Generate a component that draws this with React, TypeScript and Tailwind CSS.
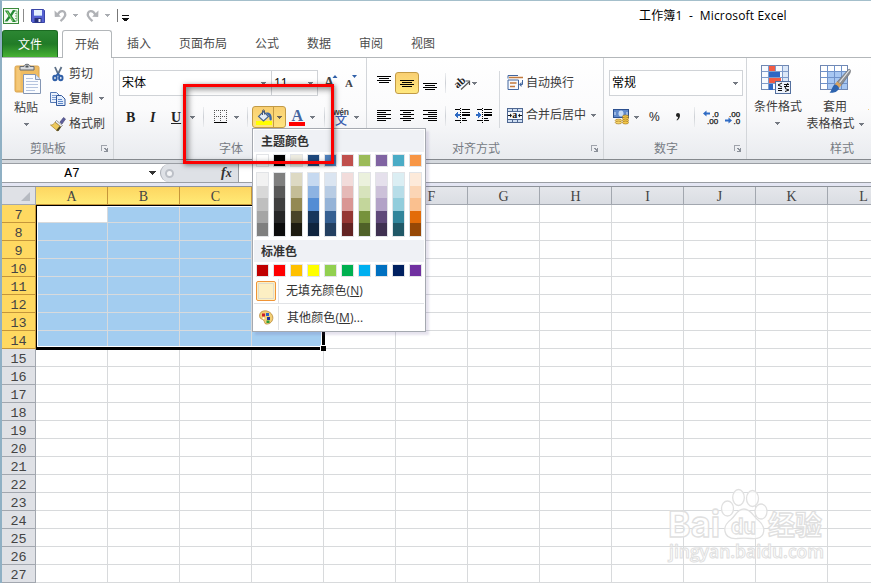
import React from 'react';

const COLUMNS = ['A', 'B', 'C', 'D', 'E', 'F', 'G', 'H', 'I', 'J', 'K', 'L'];
const ROWS = Array.from({ length: 21 }, (_, i) => i + 7);
const TABS = [
  { label: '插入', cls: 'ml-[15px]' },
  { label: '页面布局', cls: 'ml-[28px]' },
  { label: '公式', cls: 'ml-[28px]' },
  { label: '数据', cls: 'ml-[28px]' },
  { label: '审阅', cls: 'ml-[28px]' },
  { label: '视图', cls: 'ml-[28px]' },
];

const THEME = ['#ffffff', '#000000', '#eeece1', '#1f497d', '#4f81bd', '#c0504d', '#9bbb59', '#8064a2', '#4bacc6', '#f79646'];
const SHADES = [
  ['#f2f2f2', '#d8d8d8', '#bfbfbf', '#a5a5a5', '#7f7f7f'],
  ['#7f7f7f', '#595959', '#3f3f3f', '#262626', '#0c0c0c'],
  ['#ddd9c3', '#c4bd97', '#938953', '#494429', '#1d1b10'],
  ['#c6d9f0', '#8db3e2', '#548dd4', '#17365d', '#0f243e'],
  ['#dbe5f1', '#b8cce4', '#95b3d7', '#366092', '#244061'],
  ['#f2dcdb', '#e5b9b7', '#d99694', '#953734', '#632423'],
  ['#ebf1dd', '#d7e3bc', '#c3d69b', '#76923c', '#4f6128'],
  ['#e5e0ec', '#ccc1d9', '#b2a2c7', '#5f497a', '#3f3151'],
  ['#dbeef3', '#b7dde8', '#92cddc', '#31859b', '#205867'],
  ['#fdeada', '#fbd5b5', '#fac08f', '#e36c09', '#974806'],
];
const STANDARD = ['#c00000', '#ff0000', '#ffc000', '#ffff00', '#92d050', '#00b050', '#00b0f0', '#0070c0', '#002060', '#7030a0'];

function Caret({ className = '', color = '#747982' }: { className?: string; color?: string }) {
  return (
    <svg width="5" height="3" viewBox="0 0 5 3" className={`shrink-0 ${className}`} shapeRendering="crispEdges">
      <path d="M0 0h5v1h-1v1h-1v1h-1v-1h-1v-1h-1z" fill={color} />
    </svg>
  );
}

function Sep({ className = '' }: { className?: string }) {
  return <div className={`w-px h-5 shrink-0 bg-linear-to-b from-[#eceef0] via-[#cdd0d5] to-[#eceef0] ${className}`} />;
}

function Launcher({ className = '' }: { className?: string }) {
  return (
    <svg width="8" height="8" viewBox="0 0 8 8" className={`shrink-0 ${className}`} shapeRendering="crispEdges">
      <path d="M0.5 6V0.5H6" fill="none" stroke="#9fa3ab" />
      <path d="M7 3v4H3v-1h2l-2-2v-1h1l2 2v-2z" fill="#8b9099" />
    </svg>
  );
}

// rows are [x, width] pairs, drawn every other pixel
function Lines({ rows, className = '' }: { rows: number[][]; className?: string }) {
  return (
    <svg width="15" height={rows.length * 2} viewBox={`0 0 15 ${rows.length * 2}`} className={`shrink-0 ${className}`} shapeRendering="crispEdges">
      {rows.map(([x, w], i) => (
        <rect key={i} x={x} y={i * 2} width={w} height="1" fill="#000" />
      ))}
    </svg>
  );
}

const V_LINES = [[0, 14], [2, 10], [0, 14], [2, 10]];
const LEFT_LINES = [[0, 14], [0, 9], [0, 14], [0, 9], [0, 14], [0, 9]];
const CENTER_LINES = [[0, 14], [3, 8], [0, 14], [3, 8], [0, 14], [3, 8]];
const RIGHT_LINES = [[0, 14], [5, 9], [0, 14], [5, 9], [0, 14], [5, 9]];

function ExcelLogo() {
  return (
    <svg width="16" height="16" viewBox="0 0 16 16">
      <rect x="0.5" y="0.5" width="15" height="15" fill="#f4faf2" stroke="#3c8a3c" />
      <path d="M11 3h3v10h-3M12 5.5h2M12 8h2M12 10.5h2" stroke="#79b878" fill="none" />
      <path d="M1.8 2.5h3.4l2.2 3.4 2.5-3.9 2.6.2-3.6 5.7 4 6H9.6l-2.5-3.9-2.6 3.6H1.5L5.6 8z" fill="#258a35" />
      <path d="M4 3.5l6 9.5" stroke="#7fca68" strokeWidth="1.2" />
    </svg>
  );
}

function SaveIcon() {
  return (
    <svg width="14" height="14" viewBox="0 0 14 14">
      <path d="M0.5 0.5h12l1 1v12h-12l-1-1z" fill="#5561d2" stroke="#3a45a6" />
      <rect x="3" y="1" width="8" height="6" fill="#e3effe" />
      <path d="M3 6.5h8" stroke="#a9c3ee" />
      <rect x="3.5" y="9" width="7" height="4.5" fill="#26307a" />
      <rect x="7.5" y="10" width="2" height="3" fill="#f1f3fb" />
    </svg>
  );
}

function UndoIcon({ flip = false }: { flip?: boolean }) {
  return (
    <svg width="13" height="14" viewBox="0 0 13 14" className={flip ? '-scale-x-100' : ''}>
      <path d="M3.5 6C5 3 7 2 8.500 2.200c2.500.300 3.300 2.800 2.300 5-.700 1.800-2.300 3.300-4.300 5" fill="none" stroke="#b0b2b6" strokeWidth="2.300" />
      <path d="M0.5 1.5l.300 6.500 6-.300-2-2.200z" fill="#b0b2b6" />
    </svg>
  );
}

function PasteIcon() {
  return (
    <svg width="28" height="32" viewBox="0 0 28 32">
      <rect x="1" y="3" width="24" height="26" rx="1.5" fill="#efbc62" stroke="#d9a450" />
      <path d="M2.5 5h4v22h-4z" fill="#f4c878" />
      <path d="M6 3.5h4C10 .5 16 .5 16 3.5h4v3.500H6z" fill="#d7dade" stroke="#64696f" />
      <rect x="11.5" y="2.5" width="3" height="2" fill="#4f5459" />
      <path d="M9.5 11.5h12l5 5v14h-17z" fill="#fafcff" stroke="#8496b4" />
      <path d="M21.5 11.5v5h5" fill="#dce6f5" stroke="#8496b4" />
      <path d="M12 15.5h7M12 18.5h12M12 21.5h12M12 24.5h12M12 27.5h9" stroke="#b5c4df" />
    </svg>
  );
}

function CutIcon() {
  return (
    <svg width="16" height="16" viewBox="0 0 16 16">
      <path d="M5 1l3.500 8M11.5 1L7.500 9" stroke="#5d7088" strokeWidth="1.800" fill="none" />
      <ellipse cx="5" cy="12" rx="1.700" ry="2.200" fill="none" stroke="#2f5fa8" strokeWidth="2" />
      <ellipse cx="10.800" cy="12" rx="1.700" ry="2.200" fill="none" stroke="#2f5fa8" strokeWidth="2" />
      <path d="M6 10l2-2 2 2" stroke="#2f5fa8" strokeWidth="1.800" fill="none" />
    </svg>
  );
}

function CopyIcon() {
  return (
    <svg width="16" height="16" viewBox="0 0 16 16">
      <path d="M0.5 1.5h6l3 3v7h-9z" fill="#eaf1fc" stroke="#5479b5" />
      <path d="M2 4.5h4M2 6.5h4M2 8.5h4" stroke="#7fa0d4" />
      <path d="M6.5 4.5h5l3.500 3.500v6.500h-8.500z" fill="#e3edfb" stroke="#33589b" />
      <path d="M8 8.5h4M8 10.5h5M8 12.5h5" stroke="#5f88c8" />
    </svg>
  );
}

function BrushIcon() {
  return (
    <svg width="16" height="16" viewBox="0 0 16 16">
      <path d="M10 6l3.500-4.500 2 1.500L12 8z" fill="#5b5d9b" stroke="#3f3f71" strokeWidth=".6" />
      <path d="M6.5 4.5l6 5-1.500 1.500-6-5z" fill="#eceef2" stroke="#777" strokeWidth=".7" />
      <path d="M5 6.200l5.500 4.500-3 4.300L.5 9c2 .3 3.500-1 4.500-2.800z" fill="#edc95c" stroke="#a98325" strokeWidth=".7" />
      <path d="M6 14.500l3.500-4.200 1.500 1L8.500 15z" fill="#4c4522" />
    </svg>
  );
}

function BorderIcon() {
  return (
    <svg width="13" height="14" viewBox="0 0 13 14" shapeRendering="crispEdges">
      <path d="M.5 0v12M6.5 0v12M12.5 0v12M0 .5h13M0 6.5h13" stroke="#555" strokeDasharray="1 1" fill="none" />
      <rect x="0" y="12" width="13" height="1" fill="#000" />
    </svg>
  );
}

function FillIcon() {
  return (
    <svg width="17" height="17" viewBox="0 0 17 17">
      <rect x="0" y="12" width="16" height="4" fill="#ffff00" />
      <path d="M7.500 2.500l5 5-5 4.500-5-4.500z" fill="#e3edf7" stroke="#43618e" strokeWidth="1.100" />
      <path d="M6.500 6V2c0-1.500 2-1.500 2 0v3.500" fill="none" stroke="#4b5970" />
      <path d="M10 3.500c4-.5 6 1.500 5.800 7-.5 1.500-2.300 1-2.300-.5 0-2.500-1-4.500-3-5z" fill="#3a66a8" />
    </svg>
  );
}

function IndentIcon({ right = false }: { right?: boolean }) {
  return (
    <svg width="16" height="15" viewBox="0 0 16 15" shapeRendering="crispEdges">
      <path d="M1 1.500h5M8 1.500h8M1 12.500h5M8 12.500h5M8 4.500h8M8 10.500h4" stroke="#000" />
      <path d="M8 7h8" stroke="#000" strokeWidth="2" />
      <path d="M6.500 0v15" stroke="#000" strokeDasharray="1 1" />
      {right ? <path d="M0 6h2V4l4 3-4 3V8H0z" fill="#2f6bc4" /> : <path d="M6 6H4V4L0 7l4 3V8h2z" fill="#2f6bc4" />}
    </svg>
  );
}

function OrientationIcon() {
  return (
    <svg width="17" height="16" viewBox="0 0 17 16" className="overflow-visible">
      <text x="0" y="11" fontFamily="Liberation Serif, serif" fontWeight="bold" fontSize="11" fill="#222" transform="rotate(-42 5 9)">ab</text>
      <path d="M6 14.500L14 7" stroke="#555" strokeWidth="1.200" />
      <path d="M10.500 6H14.500v4" fill="none" stroke="#555" strokeWidth="1.200" />
    </svg>
  );
}

function WrapIcon() {
  return (
    <svg width="17" height="16" viewBox="0 0 17 16">
      <path d="M1 .5h10M1 5h10.500v9.500H1z" stroke="#42669f" fill="#f7f9fd" />
      <path d="M1 .5v3" stroke="#42669f" />
      <path d="M2 2.500h14M3 8h6.500M3 11.500h5" stroke="#c27a3d" strokeWidth="1.500" />
      <path d="M15.500 5v4.500h-2" stroke="#42669f" fill="none" />
      <path d="M14.500 7v5l-2.500-2.500z" fill="#42669f" />
    </svg>
  );
}

function MergeIcon() {
  return (
    <svg width="16" height="15" viewBox="0 0 16 15">
      <rect x=".5" y=".5" width="15" height="14" fill="#cfdef2" stroke="#4e6791" />
      <path d="M.5 3.500h15M.5 11.500h15M5.500 0v3.500M10.500 0v3.500M5.500 11.500V15M10.500 11.500V15" stroke="#4e6791" />
      <rect x="1" y="4" width="14" height="7" fill="#f5f9ff" />
      <text x="5.200" y="10.300" fontFamily="Liberation Serif, serif" fontWeight="bold" fontSize="10" fill="#111">a</text>
      <path d="M1 7.500h3M12 7.500h3" stroke="#111" />
      <path d="M3 5.500l2 2-2 2zM13 5.500l-2 2 2 2z" fill="#111" />
    </svg>
  );
}

function CurrencyIcon() {
  return (
    <svg width="16" height="16" viewBox="0 0 16 16">
      <rect x=".5" y=".5" width="15" height="8" fill="#6089ca" stroke="#2c508f" />
      <ellipse cx="8" cy="4.500" rx="2.500" ry="3" fill="#c7dbf5" />
      <path d="M2 3v3M14 3v3" stroke="#d6e5f9" />
      {[7.5, 9.5, 11.5, 13.5].map(y => (
        <ellipse key={y} cx="12.500" cy={y} rx="3" ry="1.500" fill="#f5c94b" stroke="#9b6e17" strokeWidth=".6" />
      ))}
      {[11.5, 13.5].map(y => (
        <ellipse key={y} cx="5.500" cy={y} rx="3.300" ry="1.400" fill="#f8d66b" stroke="#9b6e17" strokeWidth=".6" />
      ))}
    </svg>
  );
}

function DecimalIcon({ increase = false }: { increase?: boolean }) {
  const font = { fontFamily: 'Liberation Sans, sans-serif', fontSize: 8, fill: '#111', stroke: '#111', strokeWidth: 0.25 };
  return (
    <svg width="17" height="15" viewBox="0 0 17 15" className="shrink-0 overflow-visible">
      {increase ? (
        <>
          <text x="9" y="6.500" {...font}>.0</text>
          <text x="4" y="13.500" {...font}>.00</text>
          <path d="M0 3.500l3.500-3v2H7v2H3.500v2z" fill="#2f6bc4" />
        </>
      ) : (
        <>
          <text x="4" y="6.500" {...font}>.00</text>
          <text x="8.500" y="13.500" {...font}>.0</text>
          <path d="M7 10.500l-3.500-3v2H0v2h3.500v2z" fill="#2f6bc4" />
        </>
      )}
    </svg>
  );
}

function CondFormatIcon() {
  return (
    <svg width="30" height="29" viewBox="0 0 30 29">
      <rect x=".5" y=".5" width="27" height="24" fill="#f7faff" stroke="#7088b3" />
      <path d="M21 1h6v23h-6z" fill="#dbe7f8" />
      <rect x="7" y="1" width="7" height="6" fill="#f25c44" />
      <rect x="7" y="7" width="12" height="6" fill="#2f67c4" />
      <rect x="7" y="13" width="13" height="6" fill="#f25c44" />
      <rect x="7" y="19" width="5" height="6" fill="#2f67c4" />
      <path d="M.5 6.500h27M.5 12.500h27M.5 18.500h27M7.500 .5v24M14.500 .5v6M21.500 .5v24" stroke="#7f9bcb" fill="none" />
      <rect x="14.500" y="16.500" width="15" height="12" fill="#eef3fb" stroke="#54709f" />
      <path d="M21 18l-4 2 4 2M17 23.500h4M17 25.500h4M23 19.500h5M23 21.500h5M27 18l-3 5M24 23.500l4 1.500-4 1.500" fill="none" stroke="#111" />
    </svg>
  );
}

function TableFormatIcon() {
  return (
    <svg width="31" height="29" viewBox="0 0 31 29">
      <rect x=".5" y=".5" width="27" height="24" fill="#fff" stroke="#7088b3" />
      <path d="M7 7h20v17H7z" fill="#a7c7f2" />
      <path d="M.5 6.500h27M.5 12.500h27M.5 18.500h27M7.500 .5v24M14.500 .5v24M21.500 .5v24" stroke="#6f92ca" fill="none" />
      <path d="M29 4c2.500 1 1.500 3 .5 5l-8 11-4.500-3z" fill="#8c8f94" stroke="#686a6e" strokeWidth=".6" />
      <path d="M29.500 5l-10 12.500" stroke="#e7e9ec" strokeWidth="1.200" />
      <path d="M17 16.500l4.500 3.500-2.500 3-4.500-3z" fill="#d9a35e" />
      <path d="M15 19.500c2 .5 4 2 4 4C17 28 12 28 9.500 27.500c2-1 3-7.500 5.500-8z" fill="#2d63ae" />
    </svg>
  );
}

function PaletteIcon() {
  return (
    <svg width="15" height="15" viewBox="0 0 15 15">
      <path d="M3 1.500C7-.5 13 2 13.800 7c.5 4-2.800 7.500-6.800 7-2-.5-1-2.500-2.500-4C3 8.800.8 9 .6 6.500.5 4.500 1 2.500 3 1.500z" fill="#f3cf75" stroke="#b7893a" strokeWidth=".8" />
      <rect x="3" y="3.500" width="3" height="3" fill="#c9202c" />
      <rect x="7" y="3" width="3" height="3" fill="#2d62c6" />
      <rect x="8" y="7" width="3" height="3" fill="#20329a" />
      <rect x="7.500" y="10.500" width="3" height="2.500" fill="#2a9d3c" />
      <circle cx="4.500" cy="8.300" r="1" fill="#fff" />
    </svg>
  );
}

function TitleBar() {
  return (
    <div className="flex items-center h-[29px] shrink-0">
      <div className="ml-px"><ExcelLogo /></div>
      <div className="w-px h-[13px] bg-[#8b8b8b] ml-[4px]" />
      <div className="ml-[7px]"><SaveIcon /></div>
      <div className="ml-[9px]"><UndoIcon /></div>
      <Caret className="ml-[6px]" color="#a9acb1" />
      <div className="ml-[8px]"><UndoIcon flip /></div>
      <Caret className="ml-[6px]" color="#a9acb1" />
      <div className="w-px h-[13px] bg-[#777] ml-[7px]" />
      <svg width="7" height="6" viewBox="0 0 7 6" className="ml-[4px] mt-[4px]" shapeRendering="crispEdges">
        <path d="M0 0h7v1H0zM0 3h7v1H6v1H5v1H2V5H1V4H0z" fill="#111" />
      </svg>
      <div className="ml-[510px] text-[12px] text-black whitespace-pre tracking-[0.17px]">工作簿1  -  Microsoft Excel</div>
    </div>
  );
}

function TabBar() {
  return (
    <div className="flex h-[28px] shrink-0 border-b border-[#b3b7ba] text-[12px] text-[#4c4c4c]">
      <div className="w-[56px] h-[27px] rounded-t-[3px] border border-b-0 border-[#1b6b22] bg-linear-to-b from-[#2c8733] via-[#217b27] to-[#47b233] text-white flex items-center justify-center pt-px">文件</div>
      <div className="ml-[4px] w-[50px] h-[28px] rounded-t-[3px] border border-b-0 border-[#b3b7ba] bg-white flex items-center justify-center">开始</div>
      {TABS.map(tab => (
        <div key={tab.label} className={`${tab.cls} flex items-center pt-px`}>{tab.label}</div>
      ))}
    </div>
  );
}

function ClipboardGroup() {
  return (
    <div className="w-[112px] shrink-0 border-r border-[#d3d6da] flex flex-col">
      <div className="flex h-[83px]">
        <div className="w-[48px] flex flex-col items-center pt-[5px]">
          <div className="ml-[3px]"><PasteIcon /></div>
          <div className="h-[16px] mt-[5px] leading-[16px]">粘贴</div>
          <Caret className="mt-[7px]" />
        </div>
        <div className="pt-[3px] flex flex-col">
          <div className="flex items-center h-[25px] gap-[3px]"><CutIcon />剪切</div>
          <div className="flex items-center h-[25px] gap-[3px]"><CopyIcon />复制<Caret className="ml-[3px]" /></div>
          <div className="flex items-center h-[25px] gap-[3px]"><BrushIcon />格式刷</div>
        </div>
      </div>
      <div className="flex items-center h-[16px] text-[#767b83]">
        <span className="ml-[28px] w-[36px]">剪贴板</span>
        <Launcher className="ml-[35px]" />
      </div>
    </div>
  );
}

function FontGroup() {
  return (
    <div className="w-[253px] shrink-0 border-r border-[#d3d6da] flex flex-col">
      <div className="flex items-start mt-[12px] ml-[5px] h-[26px]">
        <div className="w-[153px] h-[26px] border border-[#d0d3d7] bg-white flex items-center justify-between pl-[2px] pr-[5px] text-black">宋体<Caret /></div>
        <div className="w-[46px] h-[26px] border border-l-0 border-[#d0d3d7] bg-white flex items-center justify-between pl-[2px] pr-[4px] text-black text-[12px]">11<Caret /></div>
        <svg width="16" height="16" viewBox="0 0 16 16" className="ml-[6px] mt-[3px]">
          <text x="0" y="14" fontFamily="Liberation Serif, serif" fontWeight="bold" fontSize="14" fill="#444">A</text>
          <path d="M8.500 5l2.500-3 2.500 3z" fill="#2f5fa8" />
        </svg>
        <svg width="14" height="16" viewBox="0 0 14 16" className="ml-[5px] mt-[3px]">
          <text x="0" y="14" fontFamily="Liberation Serif, serif" fontWeight="bold" fontSize="11" fill="#444">A</text>
          <path d="M7 2h5l-2.500 3z" fill="#2f5fa8" />
        </svg>
      </div>
      <div className="flex items-center mt-[10px] h-[22px] font-['Liberation_Serif',serif] text-[#222] text-[14px]">
        <span className="ml-[12px] w-[10px] font-bold">B</span>
        <span className="ml-[14px] w-[9px] italic font-bold">I</span>
        <span className="ml-[12px] w-[10px] font-bold underline text-[14px]">U</span>
        <Caret className="ml-[9px]" />
        <Sep className="ml-[8px]" />
        <div className="ml-[10px]"><BorderIcon /></div>
        <Caret className="ml-[7px]" />
        <Sep className="ml-[8px]" />
        <div className="ml-[4px] w-[34px] h-[22px] rounded-[3px] border border-[#c29a45] bg-linear-to-b from-[#f9cf72] to-[#ffe580] flex items-center">
          <div className="w-[21px] h-full pl-[3px] pt-[2px] border-r border-[#c29a45]"><FillIcon /></div>
          <Caret className="ml-[3px]" color="#6e6557" />
        </div>
        <svg width="16" height="17" viewBox="0 0 16 17" className="ml-[3px]">
          <text x="2.500" y="11.500" fontFamily="Liberation Serif, serif" fontWeight="bold" fontSize="16" fill="#4465a0">A</text>
          <rect x="0" y="13" width="16" height="4" fill="#f00" />
        </svg>
        <Caret className="ml-[5px]" />
        <Sep className="ml-[9px]" />
        <svg width="17" height="18" viewBox="0 0 17 18" className="ml-[8px] overflow-visible">
          <text x="0" y="6.500" fontFamily="Liberation Sans, sans-serif" fontWeight="bold" fontSize="8.500" fill="#444" textLength="16">wén</text>
          <text x="2" y="17" fontFamily="Noto Sans CJK SC, sans-serif" fontSize="12" fontWeight="500" fill="#3c5fb0">文</text>
        </svg>
        <Caret className="ml-[4px]" />
      </div>
      <div className="mt-[13px] h-[16px] leading-[16px] pl-[105px] text-[#767b83]">字体</div>
    </div>
  );
}

function AlignGroup() {
  return (
    <div className="w-[237px] shrink-0 border-r border-[#d3d6da] flex flex-col">
      <div className="flex mt-[13px] h-[57px]">
        <div className="w-[132px] flex flex-col">
          <div className="flex items-center h-[24px]">
            <Lines rows={V_LINES} className="ml-[10px] -mt-[6px]" />
            <div className="ml-[3px] w-[24px] h-[22px] rounded-[3px] border border-[#c29a45] bg-linear-to-b from-[#f9cf72] to-[#ffe87e] flex items-center justify-center">
              <Lines rows={V_LINES} className="mt-px" />
            </div>
            <Lines rows={V_LINES} className="ml-[4px] mt-[7px]" />
            <Sep className="ml-[7px]" />
            <div className="ml-[9px]"><OrientationIcon /></div>
            <Caret />
          </div>
          <div className="flex items-center h-[22px] mt-[10px]">
            <Lines rows={LEFT_LINES} className="ml-[10px] -mt-px" />
            <Lines rows={CENTER_LINES} className="ml-[8px] -mt-px" />
            <Lines rows={RIGHT_LINES} className="ml-[8px] -mt-px" />
            <Sep className="ml-[7px]" />
            <div className="ml-[8px] -mt-px"><IndentIcon /></div>
            <div className="ml-[6px] -mt-px"><IndentIcon right /></div>
          </div>
        </div>
        <div className="w-px bg-[#d6d9dd]" />
        <div className="flex flex-col pl-[7px]">
          <div className="flex items-center h-[24px] gap-[2px]"><WrapIcon />自动换行</div>
          <div className="flex items-center h-[22px] mt-[9px] gap-[3px]"><MergeIcon />合并后居中<Caret className="ml-[2px]" /></div>
        </div>
      </div>
      <div className="mt-[13px] h-[16px] flex items-center text-[#767b83]">
        <span className="ml-[85px] w-[48px]">对齐方式</span>
        <Launcher className="ml-[91px]" />
      </div>
    </div>
  );
}

function NumberGroup() {
  return (
    <div className="w-[143px] shrink-0 border-r border-[#d3d6da] flex flex-col">
      <div className="mt-[12px] ml-[5px] w-[134px] h-[26px] border border-[#d0d3d7] bg-white flex items-center justify-between pl-[2px] pr-[4px] text-black">常规<Caret /></div>
      <div className="flex items-center mt-[10px] h-[22px]">
        <div className="ml-[9px]"><CurrencyIcon /></div>
        <Caret className="ml-[5px]" />
        <span className="ml-[10px] w-[11px] text-[12px] text-[#222] font-['Liberation_Sans',sans-serif]">%</span>
        <svg width="6" height="8" viewBox="0 0 6 8" className="ml-[15px]">
          <path d="M1 2a2 2 0 1 1 4 0c0 2.500-1 4.500-3 5.500l-.5-.5c1-.8 1.500-2 1.500-3C1.800 4 1 3 1 2z" fill="#222" />
        </svg>
        <Sep className="ml-[13px]" />
        <div className="ml-[8px]"><DecimalIcon increase /></div>
        <div className="ml-[5px]"><DecimalIcon /></div>
      </div>
      <div className="mt-[13px] h-[16px] flex items-center text-[#767b83]">
        <span className="ml-[50px] w-[24px]">数字</span>
        <Launcher className="ml-[56px]" />
      </div>
    </div>
  );
}

function StylesGroup() {
  return (
    <div className="w-[122px] shrink-0 flex flex-col overflow-hidden">
      <div className="flex h-[83px] pt-[7px]">
        <div className="ml-[6px] w-[50px] flex flex-col items-center shrink-0">
          <div className="-ml-[4px]"><CondFormatIcon /></div>
          <div className="h-[16px] mt-[5px] leading-[16px] whitespace-nowrap">条件格式</div>
          <Caret className="mt-[7px] -ml-[2px]" />
        </div>
        <div className="ml-[2px] w-[60px] flex flex-col items-center shrink-0">
          <TableFormatIcon />
          <div className="h-[16px] mt-[5px] leading-[16px]">套用</div>
          <div className="h-[18px] leading-[18px] flex items-center whitespace-nowrap">表格格式<Caret className="ml-[4px]" /></div>
        </div>
        <div className="ml-[3px] mt-[34px] h-[16px] leading-[16px] shrink-0 whitespace-nowrap text-[#a8682b]">单元格</div>
      </div>
      <div className="h-[16px] leading-[16px] pl-[83px] text-[#767b83]">样式</div>
    </div>
  );
}

function FormulaBar() {
  return (
    <div className="flex h-[20px] shrink-0 border-y border-[#9a9ea4] bg-white">
      <div className="w-[158px] flex items-center">
        <span className="ml-[62px] w-[16px] pt-[2px] text-center text-black text-[13px] font-['Liberation_Mono',monospace]">A7</span>
        <svg width="7" height="4" viewBox="0 0 7 4" className="ml-[69px]" shapeRendering="crispEdges">
          <path d="M0 0h7v1H6v1H5v1H4v1H3V3H2V2H1V1H0z" fill="#333" />
        </svg>
      </div>
      <div className="w-[79px] rounded-l-full border-l border-l-[#a9adb5] bg-[#dee1e6] border-r border-r-[#9a9ea4] flex items-center">
        <div className="ml-[4px] w-[9px] h-[9px] rounded-full border-2 border-[#bcc0c7] bg-[#f4f5f7]" />
        <span className="ml-[47px] text-[14px] leading-[16px] font-bold italic text-[#333] font-['Liberation_Serif',serif]">f<span className="text-[12px]">x</span></span>
      </div>
    </div>
  );
}

function Sheet() {
  return (
    <div className="flex flex-col w-[898px] text-[#444]">
      <div className="flex h-[18px] text-[14px] leading-[20px] font-['Liberation_Serif',serif]">
        <div className="w-[34px] shrink-0 bg-[#dfe1e6] border-r border-b border-[#a2a7af] flex items-end justify-end pr-[5px] pb-[3px]">
          <svg width="9" height="9" viewBox="0 0 9 9"><path d="M9 0v9H0z" fill="#b6bac1" /></svg>
        </div>
        {COLUMNS.map((col, i) => (
          <div
            key={col}
            className={`w-[72px] shrink-0 h-[18px] text-center border-r border-b ${i < 4 ? 'bg-linear-to-b from-[#fdd661] to-[#ffea76] border-[#c5963a]' : 'bg-linear-to-b from-[#e5e7eb] to-[#dadde3] border-[#a2a7af]'}`}
          >
            {col}
          </div>
        ))}
      </div>
      {ROWS.map(row => (
        <div key={row} className="flex h-[18px]">
          <div className={`w-[34px] h-[18px] shrink-0 text-center leading-[21px] text-[13.5px] font-['Liberation_Mono',monospace] border-r border-b ${row < 15 ? 'bg-[#ffd961] border-[#c5963a]' : 'bg-[#dfe1e6] border-[#a2a7af]'}`}>
            {row}
          </div>
          {COLUMNS.map((col, i) => (
            <div
              key={col}
              className={`w-[72px] shrink-0 border-r border-b border-[#d8dadc] ${row < 15 && i < 4 && !(row === 7 && i === 0) ? 'bg-[#a3cdf0]' : 'bg-white'}`}
            />
          ))}
        </div>
      ))}
    </div>
  );
}

function ColorMenu() {
  return (
    <div className="absolute left-[252px] top-[128px] w-[174px] h-[204px] bg-white border border-[#a5a9b0] shadow-[3px_3px_2px_rgba(90,70,140,0.15)] p-px flex flex-col text-[12px] text-[#333]">
      <div className="h-[22px] leading-[24px] bg-[#eff1f5] pl-[7px] font-semibold">主题颜色</div>
      <div className="flex gap-[4px] pl-[2px] mt-[2px]">
        {THEME.map(c => (
          <div key={c} className="w-[13px] h-[13px] border border-[#e2e4e7]" style={{ backgroundColor: c }} />
        ))}
      </div>
      <div className="flex gap-[4px] pl-[2px] mt-[5px]">
        {SHADES.map((shades, i) => (
          <div key={i} className="w-[13px] h-[65px] border border-[#e2e4e7] flex flex-col">
            {shades.map(c => (
              <div key={c} className="flex-1" style={{ backgroundColor: c }} />
            ))}
          </div>
        ))}
      </div>
      <div className="h-[22px] mt-[3px] leading-[24px] bg-[#eff1f5] pl-[7px] font-semibold">标准色</div>
      <div className="flex gap-[4px] pl-[2px] mt-[2px]">
        {STANDARD.map(c => (
          <div key={c} className="w-[13px] h-[13px] border border-[#e2e4e7]" style={{ backgroundColor: c }} />
        ))}
      </div>
      <div className="flex items-center h-[25px] mt-px pt-px">
        <div className="ml-[2px] w-[20px] h-[20px] rounded-[2px] border border-[#f09436] bg-[#fcefc3] p-px">
          <div className="w-full h-full border border-[#e0dccb]" />
        </div>
        <div className="ml-[2px] w-px h-[24px] bg-[#dfe1e5]" />
        <span className="ml-[7px] tracking-[0.1px]">无填充颜色(<u>N</u>)</span>
      </div>
      <div className="flex items-center h-[28px] pt-px border-t border-[#e1e3e6]">
        <div className="ml-[5px]"><PaletteIcon /></div>
        <div className="ml-[4px] w-px h-[24px] bg-[#dfe1e5]" />
        <span className="ml-[8px] tracking-[0.1px]">其他颜色(<u>M</u>)...</span>
      </div>
    </div>
  );
}

function Watermark() {
  return (
    <svg width="162" height="80" viewBox="0 0 162 80" className="absolute left-[664px] top-[484px]" fill="#fff" fillOpacity="0.75" stroke="#e0e0e0" strokeWidth="1.300">
      <text x="2" y="52" fontFamily="Inter, sans-serif" fontWeight="bold" fontSize="36" textLength="52" lengthAdjust="spacingAndGlyphs">Bai</text>
      <ellipse cx="61.500" cy="23.500" rx="6" ry="7.500" />
      <ellipse cx="72.500" cy="12.500" rx="5.800" ry="8" />
      <ellipse cx="86.500" cy="13.500" rx="6" ry="8" />
      <ellipse cx="95" cy="26.500" rx="6" ry="7.500" />
      <path d="M78 24c7 0 9 7 14 11 6 5 7 9 5 14-2 5-7 5-12 4.500-5-.5-9-.5-14 0-7 .5-11-2-12-7-1-6 2-9 6-12 5-4 6-10.500 13-10.500z" />
      <text x="65" y="49" fontFamily="Inter, sans-serif" fontWeight="bold" fontSize="22" textLength="25" lengthAdjust="spacingAndGlyphs">du</text>
      <text x="102" y="50" fontFamily="Noto Sans CJK SC, sans-serif" fontWeight="bold" fontSize="27">经验</text>
      <text x="3" y="73" fontFamily="Open Sans, sans-serif" fontWeight="600" fontSize="18" textLength="155" lengthAdjust="spacingAndGlyphs" strokeWidth="1">jingyan.baidu.com</text>
    </svg>
  );
}

export default function App() {
  return (
    <div className="relative w-[871px] h-[583px] overflow-hidden bg-white border-t border-l-2 border-t-[#a4bfcb] border-l-[#8fb0c4] font-['Open_Sans','Noto_Sans_CJK_SC',sans-serif] flex flex-col">
      <TitleBar />
      <TabBar />
      <div className="flex h-[102px] shrink-0 border-b border-[#84888d] bg-linear-to-b from-white via-[#fbfbfc] to-[#e9ebef] text-[12px] text-[#3c3c3c]">
        <ClipboardGroup />
        <FontGroup />
        <AlignGroup />
        <NumberGroup />
        <StylesGroup />
      </div>
      <div className="h-[3px] shrink-0 bg-[#d5d9de]" />
      <FormulaBar />
      <div className="h-[4px] shrink-0 bg-[#e4e6f3] border-b border-[#8d9299]" />
      <Sheet />

      {/* selection outline with its fill handle */}
      <div className="absolute left-[34px] top-[204px] w-[289px] h-[145px] border-t border-l border-r-3 border-b-3 border-black">
        <div className="w-full h-full border border-white" />
        <div className="absolute -right-[4px] -bottom-[4px] w-[6px] h-[6px] bg-black border-t border-l border-white" />
      </div>

      <Watermark />
      <div className="absolute inset-0 -left-[2px] -top-px">
        <ColorMenu />
        <div className="absolute left-[183px] top-[84px] w-[151px] h-[80px] border-3 border-[#fb0000] shadow-[1px_1px_5px_rgba(0,0,0,0.5),inset_2px_2px_6px_rgba(0,0,0,0.5)]" />
      </div>
    </div>
  );
}
